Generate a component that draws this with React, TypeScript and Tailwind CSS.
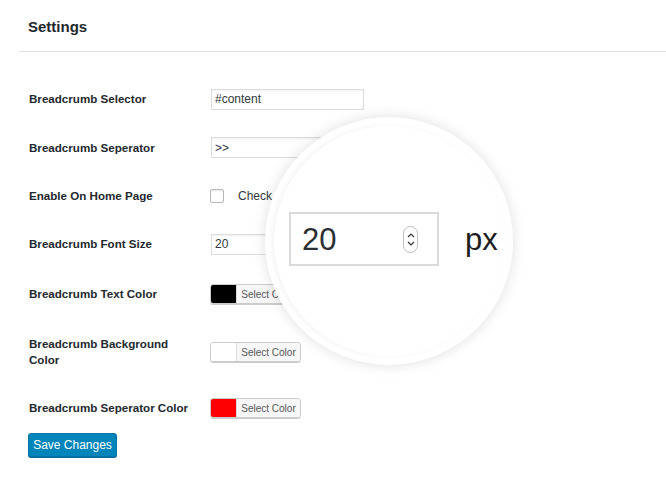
import React from 'react';

const font = "font-['Liberation_Sans','Helvetica_Neue',Arial,sans-serif]";

function TextInput({ value, width = 'w-[153px]' }: { value: string; width?: string }) {
  return (
    <div className={`${width} h-[21px] border border-[#dcdcdc] bg-white shadow-[inset_0_1px_2px_rgba(0,0,0,0.06)] flex items-center px-[3px] text-[12px] text-[#32373c]`}>
      {value}
    </div>
  );
}

function ColorButton({ color }: { color: string }) {
  return (
    <div className="-ml-[1px] flex h-[20px] w-[91px] rounded-[3px] border border-[#cccccc] shadow-[0_1px_0_#cccccc] overflow-hidden">
      <div className="w-[25px] h-full" style={{ background: color }} />
      <div className="flex-1 bg-[#f7f7f7] border-l border-[#dddddd] flex items-center justify-center text-[10px] text-[#555]">
        Select Color
      </div>
    </div>
  );
}

function Row({ label, h, children }: { label: React.ReactNode; h: string; children: React.ReactNode }) {
  return (
    <div className={`flex items-center ${h}`}>
      <div className="w-[182px] shrink-0 text-[11.6px] font-bold text-[#23282d] leading-[16px]">{label}</div>
      {children}
    </div>
  );
}

export default function App() {
  return (
    <div className={`relative w-[666px] h-[477px] bg-white overflow-hidden ${font}`}>
      <div className="ml-[19px] h-[52px] border-b border-[#e2e2e2] pl-[9px] pt-[17px]">
        <h1 className="text-[15px] font-semibold text-[#23282d] leading-[20px]">Settings</h1>
      </div>

      <div className="pl-[29px] pt-[23px]">
        <Row label="Breadcrumb Selector" h="h-[48px]">
          <TextInput value="#content" />
        </Row>
        <Row label="Breadcrumb Seperator" h="h-[49px]">
          <TextInput value=">>" />
        </Row>
        <Row label="Enable On Home Page" h="h-[48px]">
          <div className="-ml-[1px] w-[14px] h-[14px] border border-[#b4b9be] rounded-[2px] bg-white shadow-[inset_0_1px_2px_rgba(0,0,0,0.1)]" />
          <span className="ml-[14px] text-[12px] text-[#32373c]">Check</span>
        </Row>
        <Row label="Breadcrumb Font Size" h="h-[48px]">
          <TextInput value="20" />
        </Row>
        <Row label="Breadcrumb Text Color" h="h-[52px]">
          <ColorButton color="#000000" />
        </Row>
        <Row label={<>Breadcrumb Background<br />Color</>} h="h-[64px]">
          <ColorButton color="#ffffff" />
        </Row>
        <Row label="Breadcrumb Seperator Color" h="h-[48px]">
          <ColorButton color="#ff0000" />
        </Row>
        <button className="-ml-[1px] w-[89px] h-[24px] rounded-[3px] bg-[#0085ba] border border-[#0073aa] shadow-[0_1px_0_#006799] text-white text-[12px]">
          Save Changes
        </button>
      </div>

      {/* magnifier */}
      <div className="absolute left-[265px] top-[117px] w-[248px] h-[248px] rounded-full bg-white shadow-[0_0_14px_rgba(0,0,0,0.13)]">
        <div className="absolute inset-[9px] rounded-full bg-white shadow-[-2px_0_5px_rgba(0,0,0,0.05)]" />
        <div className="absolute left-[24px] top-[95px] flex items-center">
          <div className="w-[150px] h-[54px] border-2 border-[#dadada] bg-white flex items-center pl-[11px] pr-[19px]">
            <span className="flex-1 text-[31px] text-[#2c2f33] leading-none">20</span>
            <div className="w-[15px] h-[27px] rounded-full border border-[#bdbdbd] flex flex-col items-center justify-center gap-[3px]">
              <svg width="8" height="5" viewBox="0 0 8 5"><path d="M1 4L4 1L7 4" fill="none" stroke="#333" strokeWidth="1.2" /></svg>
              <svg width="8" height="5" viewBox="0 0 8 5"><path d="M1 1L4 4L7 1" fill="none" stroke="#333" strokeWidth="1.2" /></svg>
            </div>
          </div>
          <span className="ml-[26px] text-[31px] text-[#1e1e1e] leading-none">px</span>
        </div>
      </div>
    </div>
  );
}
